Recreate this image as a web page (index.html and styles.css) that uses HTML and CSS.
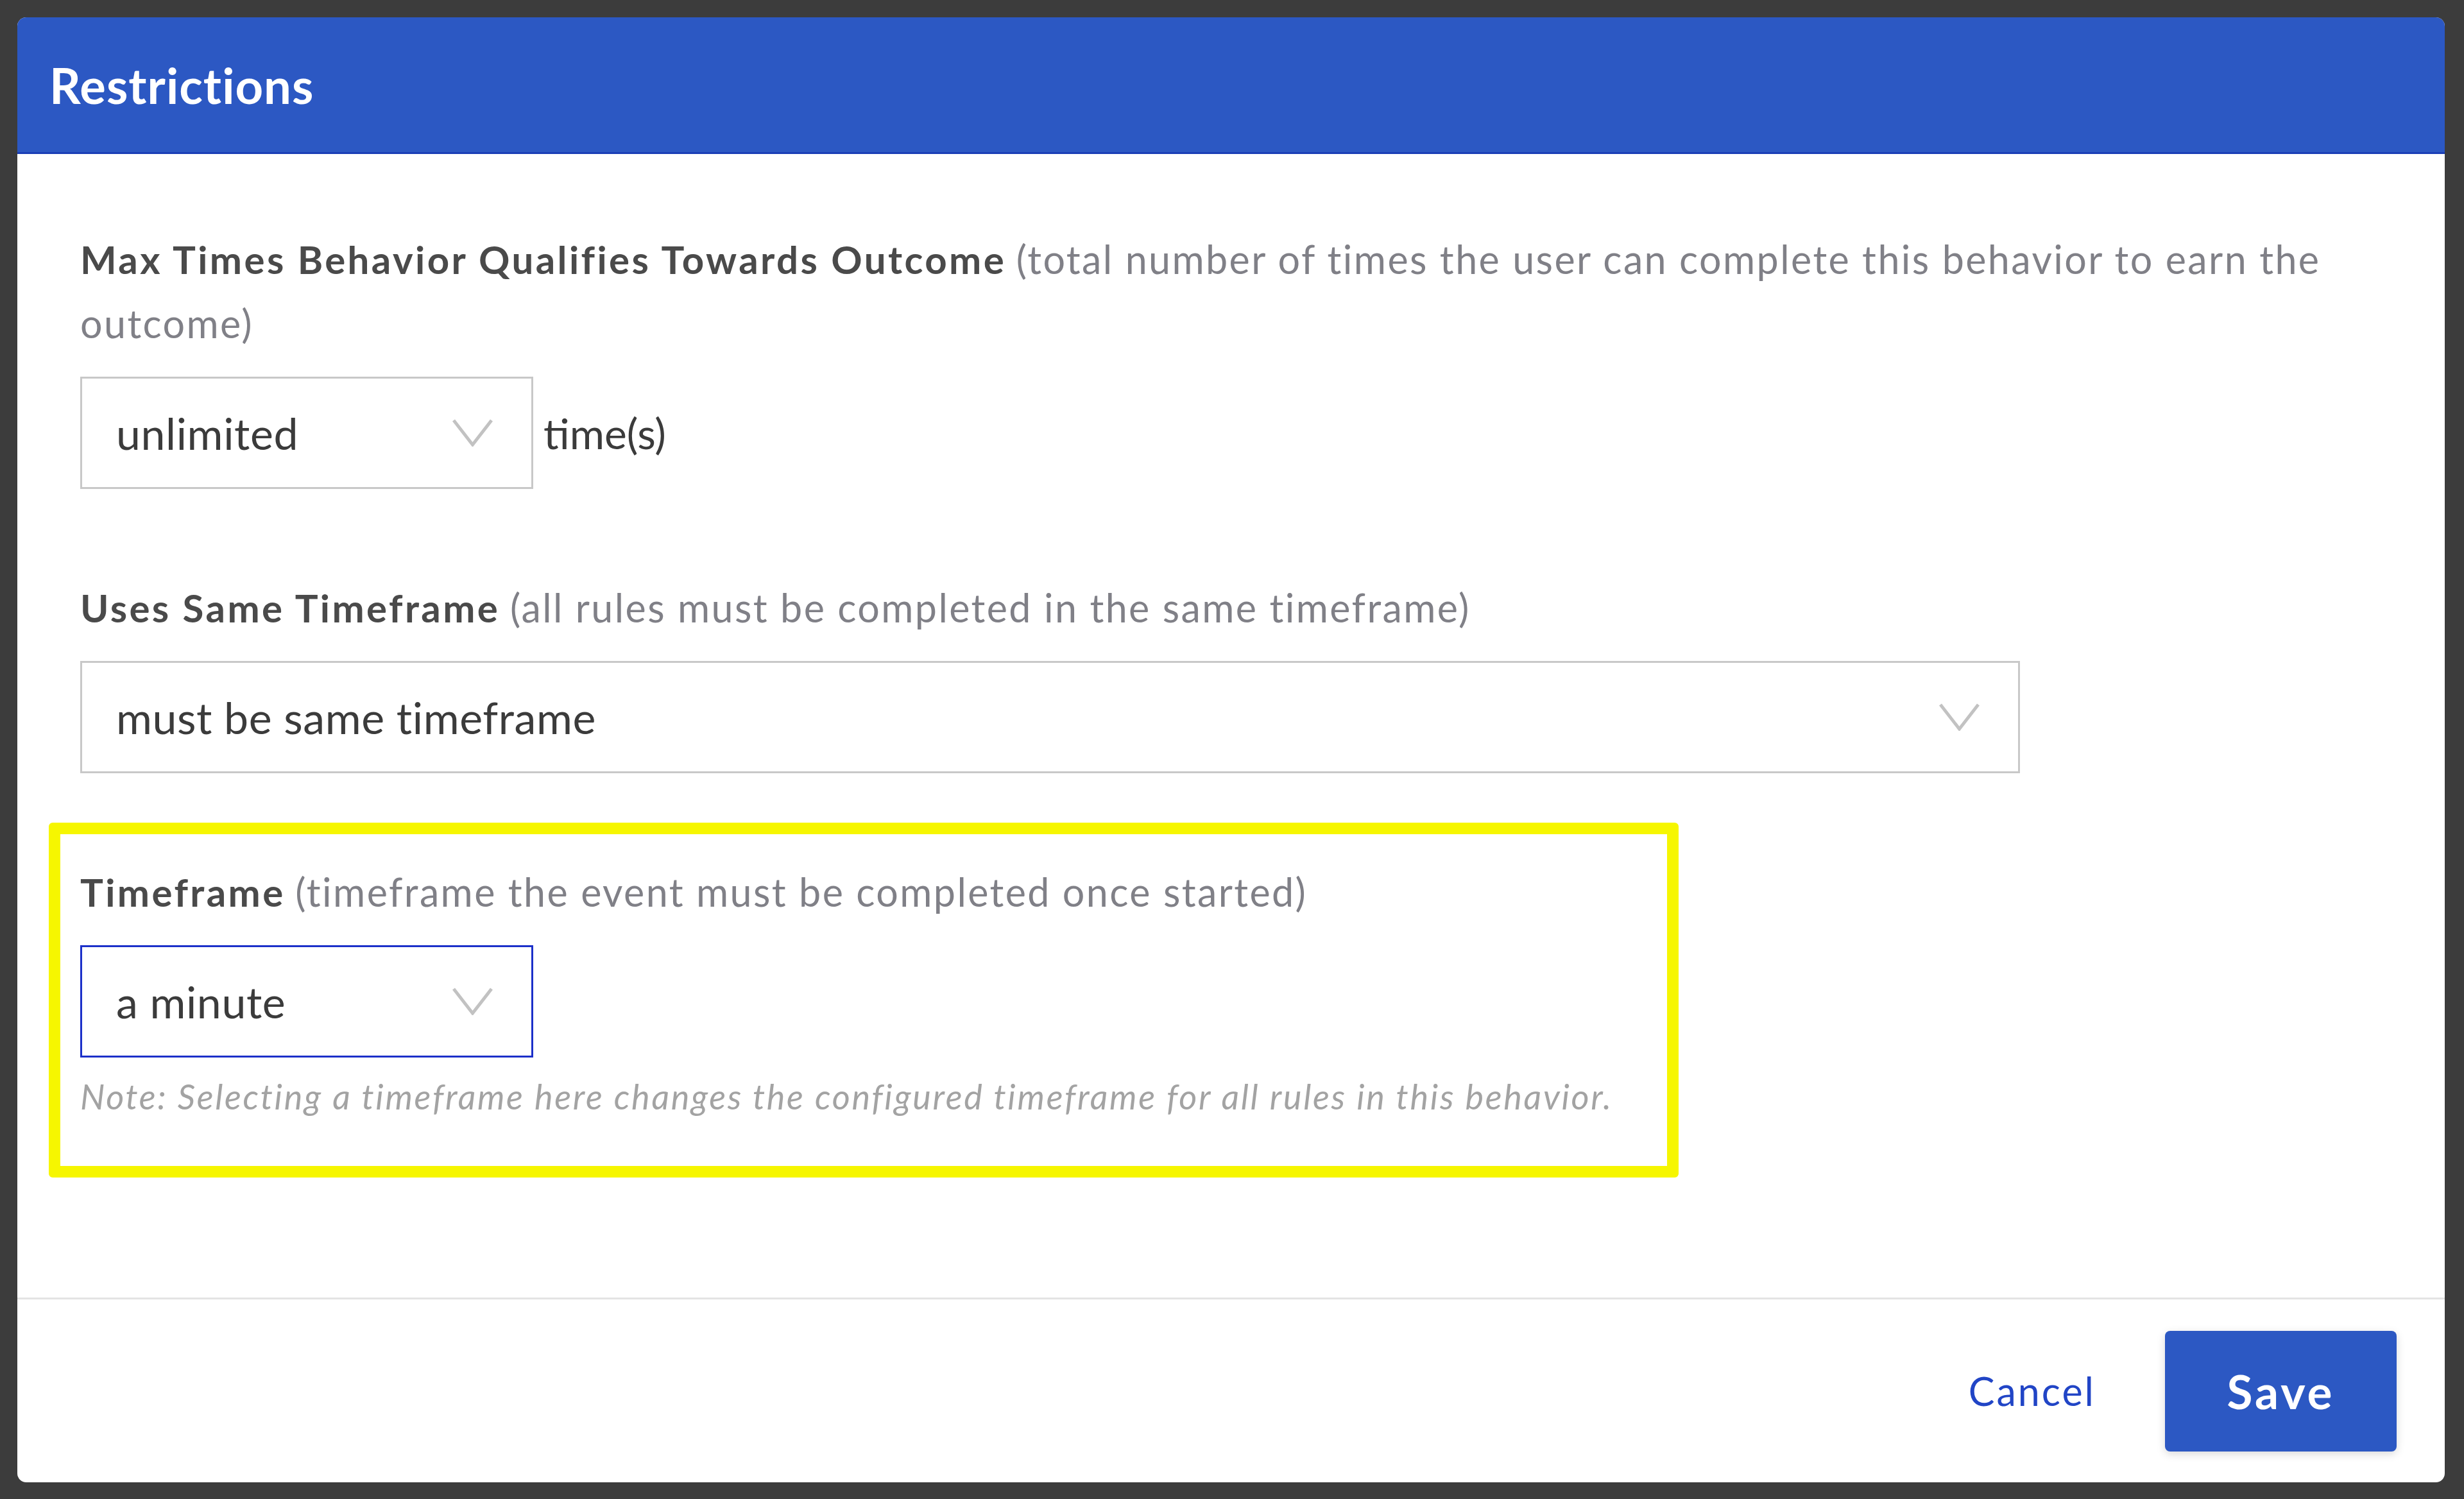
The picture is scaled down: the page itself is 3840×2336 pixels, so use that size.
FILE: index.html
```html
<!DOCTYPE html>
<html lang="en">
<head>
    <meta charset="UTF-8">
    <title>Restrictions</title>
    <link rel="stylesheet" href="styles.css">
</head>
<body>
    <div class="modal">
        <header class="modal-header">
            <h1>Restrictions</h1>
        </header>
        <div class="modal-body">
            <section class="field">
                <p class="field-label"><strong>Max Times Behavior Qualifies Towards Outcome</strong> <span class="hint">(total number of times the user can complete this behavior to earn the outcome)</span></p>
                <div class="field-row">
                    <div class="select select-small">
                        <span>unlimited</span>
                        <svg class="chevron" viewBox="0 0 63 43"><polyline points="2,2 31.5,40 61,2"/></svg>
                    </div>
                    <span class="suffix">time(s)</span>
                </div>
            </section>
            <section class="field">
                <p class="field-label"><strong>Uses Same Timeframe</strong> <span class="hint">(all rules must be completed in the same timeframe)</span></p>
                <div class="select select-wide">
                    <span>must be same timeframe</span>
                    <svg class="chevron" viewBox="0 0 63 43"><polyline points="2,2 31.5,40 61,2"/></svg>
                </div>
            </section>
            <section class="field highlight">
                <p class="field-label"><strong>Timeframe</strong> <span class="hint">(timeframe the event must be completed once started)</span></p>
                <div class="select select-small select-active">
                    <span>a minute</span>
                    <svg class="chevron" viewBox="0 0 63 43"><polyline points="2,2 31.5,40 61,2"/></svg>
                </div>
                <p class="note">Note: Selecting a timeframe here changes the configured timeframe for all rules in this behavior.</p>
            </section>
        </div>
        <footer class="modal-footer">
            <button class="link-button">Cancel</button>
            <button class="primary-button">Save</button>
        </footer>
    </div>
</body>
</html>
```

FILE: styles.css
```css
body {
    margin: 0;
    padding: 27px 30px 26px 27px;
    background-color: #3c3c3c;
    font-family: Lato, "Open Sans", sans-serif;
}
.modal {
    height: 2283px;
    display: flex;
    flex-direction: column;
    background-color: #fff;
    border-radius: 14px;
    overflow: hidden;
}
.modal-header {
    box-sizing: border-box;
    height: 213px;
    display: flex;
    align-items: center;
    padding-left: 50px;
    background-color: #2c58c3;
    border-bottom: 3px solid #1b3fb6;
}
.modal-header h1 {
    margin: 0;
    color: #fff;
    font-size: 76px;
    font-weight: 700;
    letter-spacing: 1px;
}
.modal-body {
    flex: 1;
    padding: 114px 98px 0 98px;
}
.field + .field {
    margin-top: 135px;
}
.field-label {
    margin: 0 0 33px;
    font-size: 61px;
    line-height: 100px;
    color: #808087;
}
.field-label strong {
    color: #4a4a4a;
    font-size: 60px;
    font-weight: 700;
    letter-spacing: 3.4px;
}
.hint {
    letter-spacing: 2.4px;
}
.field-row {
    display: flex;
    align-items: center;
    gap: 16px;
}
.select {
    box-sizing: border-box;
    height: 175px;
    display: flex;
    align-items: center;
    justify-content: space-between;
    padding: 0 60px 0 53px;
    border: 3px solid #c8c8c8;
    font-size: 68px;
    letter-spacing: 0.6px;
    color: #3b3b3b;
}
.select-small {
    width: 706px;
}
.select-wide {
    width: 3023px;
}
.select-active {
    border-color: #1c30c9;
}
.chevron {
    width: 63px;
    height: 43px;
}
.chevron polyline {
    fill: none;
    stroke: #c2c2c2;
    stroke-width: 5;
}
.suffix {
    font-size: 66px;
    color: #3b3b3b;
}
.note {
    margin: 23px 0 0;
    font-size: 54px;
    line-height: 75px;
    font-style: italic;
    letter-spacing: 2.7px;
    color: #a3a3a3;
}
.field.highlight {
    box-sizing: border-box;
    width: 2540px;
    margin-top: 77px;
    margin-left: -49px;
    padding: 40px 31px 71px;
    border: 18px solid #f6f600;
    border-radius: 6px;
}
.modal-footer {
    box-sizing: border-box;
    height: 288px;
    display: flex;
    justify-content: flex-end;
    align-items: center;
    gap: 108px;
    padding-right: 75px;
    border-top: 3px solid #e4e4e4;
}
.link-button {
    padding: 0;
    background: none;
    border: none;
    font-family: inherit;
    font-size: 61px;
    letter-spacing: 3px;
    color: #2145c6;
    cursor: pointer;
}
.primary-button {
    width: 361px;
    height: 188px;
    padding: 0;
    background-color: #2c58c3;
    color: #fff;
    border: none;
    border-radius: 8px;
    font-family: inherit;
    font-size: 73px;
    font-weight: 700;
    letter-spacing: 4px;
    box-shadow: 0 4px 14px rgba(0, 0, 0, 0.15);
    cursor: pointer;
}
```
